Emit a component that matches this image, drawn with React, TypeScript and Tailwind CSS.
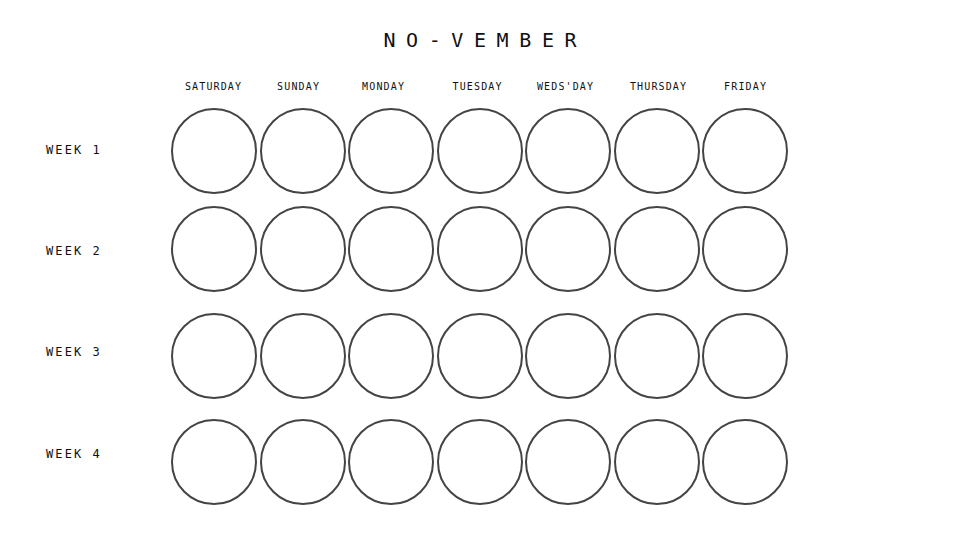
import React from "react";

const days = [
  { name: "SATURDAY", cls: "pr-[2px]" },
  { name: "SUNDAY", cls: "pr-[9px]" },
  { name: "MONDAY", cls: "pr-[16px]" },
  { name: "TUESDAY", cls: "pr-[5px]" },
  { name: "WEDS'DAY", cls: "pr-[6px]" },
  { name: "THURSDAY", cls: "pl-[3px]" },
  { name: "FRIDAY", cls: "pl-0" },
];

const weeks = [
  { label: "WEEK 1", row: "mt-[15px]", lab: "mt-[35px]" },
  { label: "WEEK 2", row: "mt-[12px]", lab: "mt-[38px]" },
  { label: "WEEK 3", row: "mt-[21px]", lab: "mt-[32px]" },
  { label: "WEEK 4", row: "mt-[20px]", lab: "mt-[28px]" },
];

const mono = { fontFamily: '"DejaVu Sans Mono", "Liberation Mono", monospace' };

export default function App() {
  return (
    <div className="w-[960px] h-[540px] bg-white text-[#111] overflow-hidden" style={mono}>
      <div className="pt-[28px] flex justify-center">
        <div className="text-[20px] leading-[24px] tracking-[10.6px] pl-[10.6px]">NO-VEMBER</div>
      </div>
      <div className="mt-[29px] flex pl-[171px] gap-[2.5px]">
        {days.map((d) => (
          <div key={d.name} className={`w-[86px] flex justify-center ${d.cls}`}>
            <span className="text-[10px] leading-[12px] tracking-[1.14px] pl-[1.14px]">{d.name}</span>
          </div>
        ))}
      </div>
      {weeks.map((w) => (
        <div key={w.label} className={`flex items-start ${w.row}`}>
          <div className="w-[171px] pl-[46px] shrink-0">
            <div className={`text-[12px] leading-[14px] tracking-[2.1px] ${w.lab}`}>{w.label}</div>
          </div>
          <div className="flex gap-[2.5px]">
            {days.map((d) => (
              <div
                key={d.name}
                className="w-[86px] h-[86px] rounded-full border-2 border-[#444] shrink-0"
              />
            ))}
          </div>
        </div>
      ))}
    </div>
  );
}
